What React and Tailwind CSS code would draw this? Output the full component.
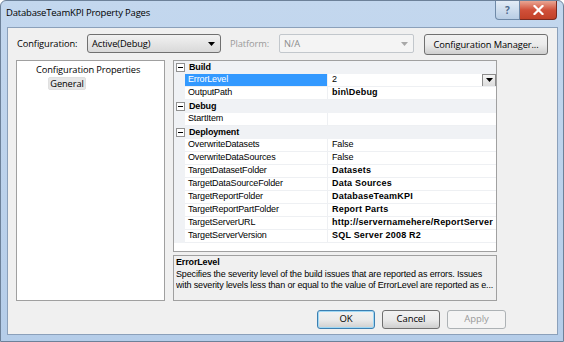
import React from 'react';

const rows = [
  { type: 'cat', name: 'Build' },
  { name: 'ErrorLevel', value: '2', selected: true },
  { name: 'OutputPath', value: 'bin\\Debug', bold: true },
  { type: 'cat', name: 'Debug' },
  { name: 'StartItem', value: '' },
  { type: 'cat', name: 'Deployment' },
  { name: 'OverwriteDatasets', value: 'False' },
  { name: 'OverwriteDataSources', value: 'False' },
  { name: 'TargetDatasetFolder', value: 'Datasets', bold: true },
  { name: 'TargetDataSourceFolder', value: 'Data Sources', bold: true },
  { name: 'TargetReportFolder', value: 'DatabaseTeamKPI', bold: true },
  { name: 'TargetReportPartFolder', value: 'Report Parts', bold: true },
  { name: 'TargetServerURL', value: 'http://servernamehere/ReportServer', bold: true },
  { name: 'TargetServerVersion', value: 'SQL Server 2008 R2', bold: true },
];

const gridFont = { fontFamily: '"Liberation Sans", Arial, sans-serif' };

function Minus() {
  return (
    <div className="w-[9px] h-[9px] border border-[#919191] bg-white flex items-center justify-center">
      <div className="w-[5px] h-px bg-black" />
    </div>
  );
}

function Arrow({ color = '#000' }) {
  return (
    <svg width="7" height="4" viewBox="0 0 7 4">
      <path d="M0 0h7L3.5 4z" fill={color} />
    </svg>
  );
}

function Button({ children, width, kind }) {
  const base =
    kind === 'disabled'
      ? 'border-[#adb2b5] bg-[#f4f4f4] text-[#9a9a9a]'
      : kind === 'default'
      ? 'border-[#3c7fb1] bg-gradient-to-b from-[#f2f2f2] via-[#ebebeb] to-[#cfcfcf] text-black shadow-[inset_0_0_0_1px_#9fd8f5]'
      : 'border-[#707070] bg-gradient-to-b from-[#f2f2f2] via-[#ebebeb] to-[#cfcfcf] text-black';
  return (
    <div
      className={`h-[19px] rounded-[3px] border flex items-center justify-center text-[9.5px] ${base}`}
      style={{ width }}
    >
      {children}
    </div>
  );
}

function PropertyGrid() {
  return (
    <div className="w-[324px] h-[192px] border border-[#a0a0a0] bg-white text-[9px] tracking-[-0.15px] text-black" style={gridFont}>
      {rows.map((r, i) =>
        r.type === 'cat' ? (
          <div key={i} className="h-[13px] flex items-center bg-[#f0f2f5]">
            <div className="w-[11px] pl-[2px] flex items-center">
              <Minus />
            </div>
            <div className="pl-[4px] font-bold">{r.name}</div>
          </div>
        ) : (
          <div key={i} className="h-[13px] flex">
            <div className="w-[11px] bg-[#f0f2f5]" />
            <div
              className={`w-[142px] flex items-center pl-[3px] border-b border-[#eef0f3] ${
                r.selected ? 'bg-[#3399ff] text-white' : ''
              }`}
            >
              {r.name}
            </div>
            <div className="w-px bg-[#eef0f3]" />
            <div className={`flex-1 flex items-center pl-[4px] border-b border-[#eef0f3] overflow-hidden whitespace-nowrap ${r.bold ? 'font-bold tracking-[0.2px]' : ''}`}>
              <span className="flex-1">{r.value}</span>
              {r.selected && (
                <div className="w-[14px] h-[13px] border border-[#8c8c8c] bg-gradient-to-b from-[#f4f4f4] to-[#dcdcdc] flex items-center justify-center">
                  <Arrow />
                </div>
              )}
            </div>
          </div>
        )
      )}
    </div>
  );
}

export default function App() {
  return (
    <div
      className="w-[564px] h-[342px] flex flex-col rounded-t-[6px] border border-[#6d8199] bg-gradient-to-b from-[#c3d7ee] to-[#b5cde9] overflow-hidden"
      style={{ fontFamily: '"Open Sans", "Noto Sans", sans-serif' }}
    >
      <div className="h-[26px] flex items-start justify-between">
        <div className="pl-[5px] pt-[5px] text-[9.5px] text-black tracking-[-0.2px]">DatabaseTeamKPI Property Pages</div>
        <div className="flex mr-[6px]">
          <div className="w-[25px] h-[19px] rounded-bl-[4px] border border-[#6f8aa8] border-t-0 bg-gradient-to-b from-[#e3ecf6] to-[#b8cde4] flex items-center justify-center text-[10px] font-bold text-[#4d6a8c]">
            ?
          </div>
          <div className="w-[37px] h-[19px] rounded-br-[4px] border border-[#7a2a20] border-t-0 border-l-0 bg-gradient-to-b from-[#e9a593] via-[#d0503a] to-[#c24128] flex items-center justify-center">
            <svg width="11" height="10" viewBox="0 0 11 10">
              <path d="M1.5 1l8 8M9.5 1l-8 8" stroke="#fff" strokeWidth="2.2" strokeLinecap="square" />
            </svg>
          </div>
        </div>
      </div>

      <div className="ml-[6px] w-[551px] h-[308px] border border-[#8ba0ba] bg-[#f0f0f0] flex flex-col text-[9.3px] tracking-[-0.1px] text-black">
        <div className="flex items-start pl-[8px] pt-[6px] h-[32px]">
          <div className="w-[71px] h-[19px] flex items-center pl-px">Configuration:</div>
          <div className="w-[134px] h-[19px] rounded-[3px] border border-[#707070] bg-gradient-to-b from-[#f2f2f2] to-[#d9d9d9] flex items-center justify-between pl-[4px] pr-[5px]">
            <span>Active(Debug)</span>
            <Arrow />
          </div>
          <div className="w-[58px] h-[19px] flex items-center pl-[9px] text-[#9a9a9a]">Platform:</div>
          <div className="w-[135px] h-[19px] rounded-[2px] border border-[#c2c7cc] bg-[#f4f4f4] flex items-center justify-between pl-[4px] pr-[5px] text-[#8d8d8d]">
            <span>N/A</span>
            <Arrow color="#a8a8a8" />
          </div>
          <div className="ml-[10px] w-[124px] h-[21px] rounded-[3px] border border-[#707070] bg-gradient-to-b from-[#f2f2f2] via-[#ebebeb] to-[#cfcfcf] flex items-center justify-center">
            Configuration Manager...
          </div>
        </div>

        <div className="flex pl-[8px] gap-[8px]">
          <div className="w-[149px] h-[241px] border border-[#a0a0a0] bg-white">
            <div className="pl-[19px] pt-[2px] leading-[13px]">Configuration Properties</div>
            <div className="ml-[31px] mt-px w-[38px] h-[13px] rounded-[2px] border border-[#e0e0e0] bg-[#e6e6e6] flex items-center justify-center">
              General
            </div>
          </div>
          <div className="flex flex-col gap-[3px]">
            <PropertyGrid />
            <div className="w-[324px] h-[46px] border border-[#a0a0a0] bg-[#f0f0f0] px-[2px] pt-[1px] text-[9px] tracking-[-0.15px] leading-[11.5px] text-black" style={gridFont}>
              <div className="font-bold">ErrorLevel</div>
              <div className="whitespace-nowrap overflow-hidden">Specifies the severity level of the build issues that are reported as errors. Issues</div>
              <div className="whitespace-nowrap overflow-hidden">with severity levels less than or equal to the value of ErrorLevel are reported as e...</div>
            </div>
          </div>
        </div>

        <div className="flex justify-end gap-[7px] pr-[51px] pt-[9px]">
          <Button width={58} kind="default">OK</Button>
          <Button width={58}>Cancel</Button>
          <Button width={59} kind="disabled">Apply</Button>
        </div>
      </div>
    </div>
  );
}
